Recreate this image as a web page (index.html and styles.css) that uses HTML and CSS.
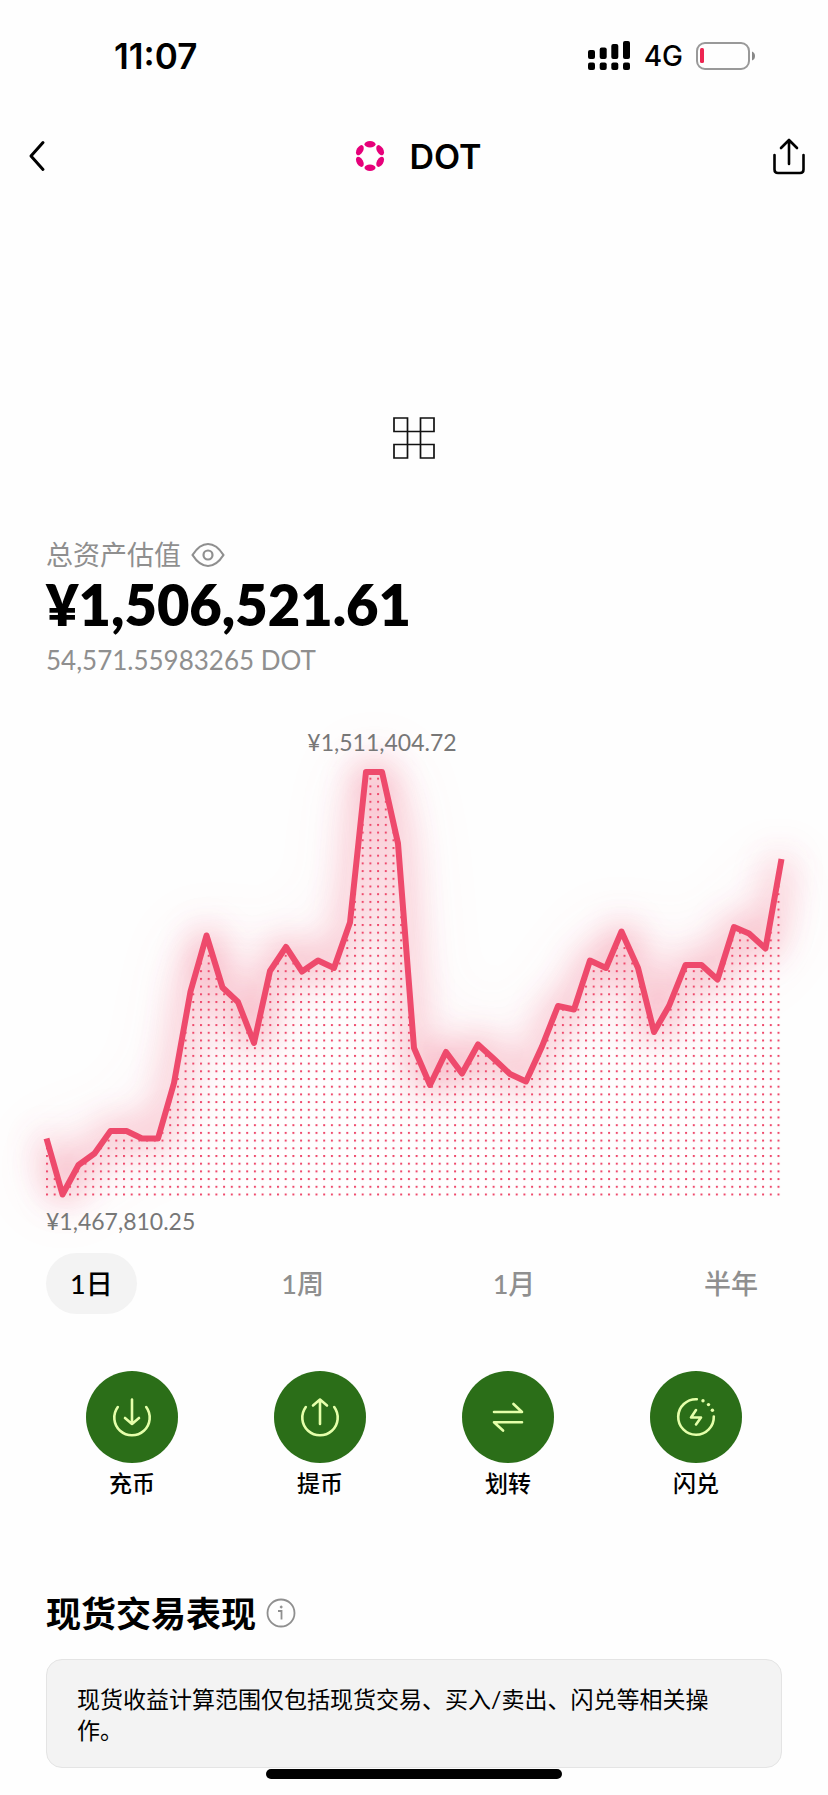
FILE: index.html
```html
<!DOCTYPE html>
<html lang="zh-CN">
<head>
<meta charset="utf-8">
<meta name="viewport" content="width=device-width, initial-scale=1">
<title>DOT</title>
<link rel="stylesheet" href="styles.css">
</head>
<body>
<div class="status-bar">
  <time class="clock">11:07</time>
  <div class="status-icons">
    <svg class="signal" viewBox="0 0 43 30" width="43" height="30" aria-hidden="true">
      <rect x="0" y="9" width="7" height="9" rx="2"/><rect x="11.7" y="6.500" width="7" height="11.500" rx="2"/><rect x="23.300" y="3" width="7" height="15" rx="2"/><rect x="35" y="0" width="7" height="18" rx="2"/>
      <rect x="0" y="21.500" width="7" height="7.500" rx="2"/><rect x="11.7" y="21.500" width="7" height="7.500" rx="2"/><rect x="23.300" y="21.500" width="7" height="7.500" rx="2"/><rect x="35" y="21.500" width="7" height="7.500" rx="2"/>
    </svg>
    <span class="network">4G</span>
    <svg class="battery" viewBox="0 0 60 28" width="60" height="28" aria-hidden="true">
      <rect x="1" y="1" width="52" height="26" rx="8" fill="none" stroke="#999" stroke-width="2"/>
      <rect x="4" y="6" width="4" height="15" rx="1.500" fill="#ed2551"/>
      <path d="M56 9.500q3 1 3 4.500t-3 4.500z" fill="#888"/>
    </svg>
  </div>
</div>

<header class="nav">
  <button class="nav-button" type="button" aria-label="返回">
    <svg viewBox="0 0 18 32" width="18" height="32"><path d="M15 2.500L3 16L15 29.500" fill="none" stroke="#000" stroke-width="3" stroke-linecap="round" stroke-linejoin="round"/></svg>
  </button>
  <h1 class="nav-title">
    <svg viewBox="-18 -18 36 36" width="36" height="36" fill="#e6007a" aria-hidden="true">
      <ellipse cx="0" cy="-11.700" rx="5.500" ry="3.200"/>
      <ellipse cx="0" cy="11.700" rx="5.500" ry="3.200"/>
      <ellipse cx="0" cy="-11.700" rx="5.500" ry="3.200" transform="rotate(60)"/>
      <ellipse cx="0" cy="-11.700" rx="5.500" ry="3.200" transform="rotate(120)"/>
      <ellipse cx="0" cy="-11.700" rx="5.500" ry="3.200" transform="rotate(240)"/>
      <ellipse cx="0" cy="-11.700" rx="5.500" ry="3.200" transform="rotate(300)"/>
    </svg>
    DOT
  </h1>
  <button class="nav-button nav-button-end" type="button" aria-label="分享">
    <svg viewBox="0 0 34 38" width="34" height="38" fill="none" stroke="#000" stroke-width="2.600" stroke-linecap="round" stroke-linejoin="round"><path d="M2.500 18V32.500q0 3.500 3.500 3.500H28q3.500 0 3.500-3.500V18M17 27V3M9 11L17 3L25 11"/></svg>
  </button>
</header>

<main>
  <div class="loader" role="status" aria-label="加载中">
    <svg viewBox="0 0 42 42" width="42" height="42" fill="none" stroke="#111" stroke-width="1.700"><path d="M1 1H14.500V14.500H1zM27.500 1H41V14.500H27.500zM1 27.500H14.500V41H1zM27.500 27.500H41V41H27.500zM14.500 14.500H27.500V27.500H14.500z"/></svg>
  </div>

  <section class="balance">
    <div class="balance-label">
      总资产估值
      <button class="icon-button" type="button" aria-label="隐藏金额">
        <svg viewBox="0 0 34 26" width="34" height="26" fill="none" stroke="#8f8f8f" stroke-width="2.200" stroke-linejoin="round"><path d="M1.500 13C6 6 11 2 17 2S28 6 32.500 13C28 20 23 24 17 24S6 20 1.500 13z"/><circle cx="17" cy="13" r="4.500"/></svg>
      </button>
    </div>
    <p class="balance-value">¥1,506,521.61</p>
    <p class="balance-sub">54,571.55983265 DOT</p>
  </section>

  <svg class="chart" viewBox="0 676 828 564" role="img" aria-label="资产走势">
    <defs>
      <pattern id="dots" x="46" y="1193.500" width="7.700" height="7.700" patternUnits="userSpaceOnUse">
        <rect width="2" height="2" fill="#ee4a6c"/>
      </pattern>
      <filter id="glow" filterUnits="userSpaceOnUse" x="-100" y="600" width="1028" height="760"><feGaussianBlur stdDeviation="18"/></filter>
      <filter id="haze" filterUnits="userSpaceOnUse" x="-100" y="600" width="1028" height="760"><feGaussianBlur stdDeviation="36"/></filter>
      <path id="trend" d="M46.500 1138.500L62.500 1194.500L78.500 1165L94.500 1153.500L110.500 1131L126.500 1131L142 1138.500L158 1138.500L174 1083L190.500 991.500L206.500 935.500L222.500 987.500L238 1002L254 1043L270 971L286 947L302 971.500L318 960.500L334 968L350 922.500L366 772L382 772L398 843.500L414 1048L430 1085L446 1052L462 1073.500L478 1044.500L494 1059L510 1074L526 1081.500L542 1046.500L558 1006L574 1009.500L590 960.500L606 968L621.500 931.500L638 968L654 1032L669 1006L685.500 965L701.500 965L717.500 979.500L734 927L749 933.500L765.500 948.500L781.500 859"/>
    </defs>
    <use href="#trend" class="trend-haze" filter="url(#haze)"/>
    <use href="#trend" class="trend-glow" filter="url(#glow)"/>
    <path fill="url(#dots)" d="M46 1138.500L62.500 1194.500L78.500 1165L94.500 1153.500L110.500 1131L126.500 1131L142 1138.500L158 1138.500L174 1083L190.500 991.500L206.500 935.500L222.500 987.500L238 1002L254 1043L270 971L286 947L302 971.500L318 960.500L334 968L350 922.500L366 772L382 772L398 843.500L414 1048L430 1085L446 1052L462 1073.500L478 1044.500L494 1059L510 1074L526 1081.500L542 1046.500L558 1006L574 1009.500L590 960.500L606 968L621.500 931.500L638 968L654 1032L669 1006L685.500 965L701.500 965L717.500 979.500L734 927L749 933.500L765.500 948.500L781.500 859V1196H46z"/>
    <use href="#trend" class="trend-line"/>
    <text class="chart-label" x="382" y="751" text-anchor="middle">¥1,511,404.72</text>
    <text class="chart-label" x="46" y="1230">¥1,467,810.25</text>
  </svg>

  <nav class="ranges" aria-label="时间范围">
    <button class="range range-active" type="button" aria-pressed="true">1日</button>
    <button class="range" type="button">1周</button>
    <button class="range" type="button">1月</button>
    <button class="range" type="button">半年</button>
  </nav>

  <div class="actions">
    <button class="action" type="button">
      <span class="action-icon"><svg viewBox="0 0 92 92"><path d="M31.800 36A17.700 17.700 0 1 0 60.200 36M46 28.500V53M39 47L46 53L53 47"/></svg></span>
      充币
    </button>
    <button class="action" type="button">
      <span class="action-icon"><svg viewBox="0 0 92 92"><path d="M31.800 36A17.700 17.700 0 1 0 60.200 36M46 53V28.500M39 34.500L46 28.500L53 34.500"/></svg></span>
      提币
    </button>
    <button class="action" type="button">
      <span class="action-icon"><svg viewBox="0 0 92 92"><path d="M32 41H60L51.500 33M60 51.300H32L41 59.500"/></svg></span>
      划转
    </button>
    <button class="action" type="button">
      <span class="action-icon"><svg viewBox="0 0 92 92"><path d="M46.800 28.200A17.800 17.800 0 1 0 63.800 45.500M46 39L41 46.500H51L46 53.500"/><g class="action-dots"><circle cx="53" cy="29.700" r="1.700"/><circle cx="58.500" cy="33.600" r="1.700"/><circle cx="62.400" cy="39.300" r="1.700"/></g></svg></span>
      闪兑
    </button>
  </div>

  <section class="performance">
    <h2 class="section-title">
      现货交易表现
      <button class="icon-button" type="button" aria-label="说明">
        <svg viewBox="0 0 30 30" width="30" height="30" fill="none" stroke="#8f8f8f" stroke-width="1.800"><circle cx="15" cy="15" r="13.500"/><path d="M12 13H15.500V21.500"/><circle cx="15.200" cy="9" r="1" fill="#8f8f8f" stroke-width="1"/></svg>
      </button>
    </h2>
    <p class="notice">现货收益计算范围仅包括现货交易、买入/卖出、闪兑等相关操作。</p>
  </section>
</main>
<div class="home-indicator"></div>
</body>
</html>
```

FILE: styles.css
```css
* {
  box-sizing: border-box;
}

body {
  margin: 0;
  background: #fefefe;
  color: #000;
  font-family: Lato, "Noto Sans CJK SC", sans-serif;
}

h1, h2, p {
  margin: 0;
}

button {
  padding: 0;
  border: 0;
  background: none;
  color: inherit;
  font: inherit;
}

svg {
  display: block;
}

.status-bar {
  display: flex;
  align-items: center;
  justify-content: space-between;
  height: 112px;
  padding: 0 72px 0 114px;
  font-family: Inter, sans-serif;
}

.clock {
  font-size: 35px;
  font-weight: 600;
}

.status-icons {
  display: flex;
  align-items: center;
  gap: 13px;
}

.network {
  font-size: 28px;
  font-weight: 500;
}

.nav {
  display: grid;
  grid-template-columns: 1fr auto 1fr;
  align-items: center;
  height: 88px;
  padding: 0 22px 0 28px;
}

.nav-button {
  justify-self: start;
}

.nav-button-end {
  justify-self: end;
}

.nav-title {
  display: flex;
  align-items: center;
  gap: 21px;
  font-family: Inter, sans-serif;
  font-size: 34px;
  font-weight: 600;
}

.loader {
  display: flex;
  justify-content: center;
  padding: 217px 0 80px;
}

.balance {
  padding: 0 46px;
}

.balance-label {
  display: flex;
  align-items: center;
  gap: 10px;
  color: #8f8f8f;
  font-size: 27px;
  line-height: 32px;
}

.balance-value {
  font-size: 56px;
  font-weight: 800;
  line-height: 68px;
}

.balance-sub {
  padding-top: 5px;
  color: #8f8f8f;
  font-size: 26px;
  line-height: 32px;
}

.chart {
  width: 100%;
  height: auto;
  overflow: visible;
}

.trend-line,
.trend-glow,
.trend-haze {
  fill: none;
  stroke: #ee4a6c;
  stroke-linejoin: round;
}

.trend-line {
  stroke-width: 6px;
}

.trend-glow {
  stroke-width: 11px;
  opacity: 0.65;
}

.trend-haze {
  stroke-width: 10px;
  opacity: 0.25;
}

.chart-label {
  fill: #777;
  font-size: 23px;
}

.ranges {
  display: flex;
  justify-content: space-between;
  padding: 13px 46px 0;
}

.range {
  height: 61px;
  padding: 0 24px 2px;
  border-radius: 31px;
  color: #8f8f8f;
  font-size: 27px;
  font-weight: 500;
}

.range-active {
  background: #f3f3f3;
  color: #000;
}

.actions {
  display: grid;
  grid-template-columns: repeat(4, 1fr);
  padding: 57px 38px 0;
}

.action {
  display: flex;
  flex-direction: column;
  align-items: center;
  gap: 6px;
  font-size: 23px;
  font-weight: 500;
  line-height: 28px;
}

.action-icon {
  width: 92px;
  height: 92px;
  border-radius: 50%;
  background: #2b6e18;
}

.action-icon path {
  fill: none;
  stroke: #e5ffaa;
  stroke-width: 2.6px;
  stroke-linecap: round;
  stroke-linejoin: round;
}

.action-dots {
  fill: #e5ffaa;
}

.performance {
  padding: 94px 46px 27px;
}

.section-title {
  display: flex;
  align-items: center;
  gap: 10px;
  font-size: 35px;
  font-weight: 700;
  line-height: 44px;
}

.notice {
  margin-top: 24px;
  padding: 24px 30px 21px;
  border: 1px solid #e4e4e4;
  border-radius: 16px;
  background: #f3f3f3;
  font-size: 23px;
  line-height: 31px;
}

.home-indicator {
  position: fixed;
  bottom: 16px;
  left: 50%;
  width: 296px;
  height: 10px;
  margin-left: -148px;
  border-radius: 5px;
  background: #000;
}
```
